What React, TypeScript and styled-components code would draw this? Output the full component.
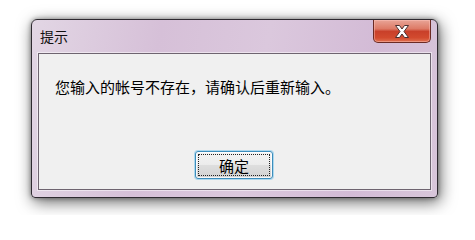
import styled, { createGlobalStyle } from 'styled-components'

const GlobalStyle = createGlobalStyle`
  html, body {
    margin: 0;
    padding: 0;
    background: #ffffff;
  }
  body {
    font-family: "Noto Sans CJK SC", "Noto Sans", sans-serif;
  }
`

const Page = styled.div`
  width: 475px;
  height: 215px;
  padding: 19px 0 0 31px;
  box-sizing: border-box;
`

const Window = styled.div`
  width: 407px;
  height: 179px;
  box-sizing: border-box;
  border: 1px solid #2e2a30;
  border-radius: 6px 6px 4px 4px;
  background: linear-gradient(100deg, #e2d6e4 0%, #d6c0d8 30%, #dbc8dd 55%, #d3bbd6 80%, #d8c6da 100%);
  box-shadow: 2px 4px 16px rgba(0, 0, 0, 0.6), 0 0 5px rgba(0, 0, 0, 0.4);
  padding: 0 6px 7px 6px;
  display: flex;
  flex-direction: column;
`

const TitleBar = styled.div`
  height: 33px;
  display: flex;
  align-items: flex-start;
  justify-content: space-between;
`

const Title = styled.span`
  line-height: 32px;
  padding-left: 2px;
  font-size: 14px;
  color: #111;
`

const CloseButton = styled.div`
  width: 58px;
  height: 23px;
  box-sizing: border-box;
  border: 1px solid #6b2b24;
  border-top: none;
  border-radius: 0 0 5px 5px;
  background: linear-gradient(180deg, #e9a597 0%, #dd7a66 40%, #c9402a 52%, #d24a2e 80%, #e07050 100%);
  box-shadow: inset 0 0 0 1px rgba(255, 200, 190, 0.45);
  display: flex;
  align-items: center;
  justify-content: center;
`

const Client = styled.div`
  flex: 1;
  border: 1px solid #6e6470;
  background: #f0f0f0;
  box-shadow: 0 0 0 1px rgba(255, 255, 255, 0.5);
  padding: 23px 16px 10px;
  display: flex;
  flex-direction: column;
  justify-content: space-between;
`

const Message = styled.div`
  font-size: 15px;
  line-height: 20px;
  color: #000;
  white-space: nowrap;
`

const OkButton = styled.button`
  align-self: center;
  width: 78px;
  height: 28px;
  box-sizing: border-box;
  border: 1px solid #3c8dbc;
  border-radius: 3px;
  background: linear-gradient(180deg, #f4f4f4 0%, #ececec 48%, #dedede 52%, #d2d2d2 100%);
  box-shadow: 0 0 0 1px rgba(130, 200, 235, 0.6), inset 0 0 0 1px rgba(255, 255, 255, 0.8);
  font-family: "Noto Sans CJK SC", sans-serif;
  font-size: 15px;
  color: #000;
  padding: 0;
  position: relative;
  margin-right: 1px;

  &::after {
    content: '';
    position: absolute;
    inset: 2px;
    border: 1px dotted #222;
  }
`

const CloseIcon = () => (
  <svg width="16" height="15" viewBox="0 0 16 15">
    <path
      d="M1.5 1.5 H5.5 L8 5 L10.5 1.5 H14.5 L10 7.5 L14.5 13.5 H10.5 L8 10 L5.5 13.5 H1.5 L6 7.5 Z"
      fill="#ffffff"
      stroke="#4a3030"
      strokeWidth="1"
      strokeLinejoin="round"
    />
  </svg>
)

const App = () => {
  return (
    <Page>
      <GlobalStyle />
      <Window>
        <TitleBar>
          <Title>提示</Title>
          <CloseButton>
            <CloseIcon />
          </CloseButton>
        </TitleBar>
        <Client>
          <Message>您输入的帐号不存在，请确认后重新输入。</Message>
          <OkButton>确定</OkButton>
        </Client>
      </Window>
    </Page>
  )
}

export default App
